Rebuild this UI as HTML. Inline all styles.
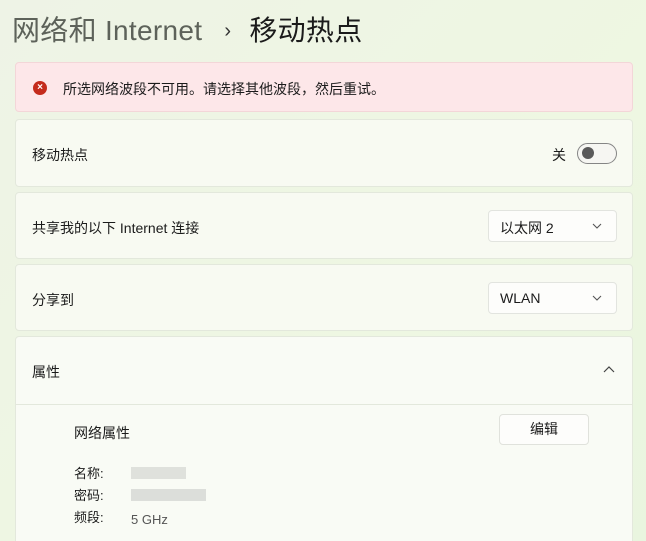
<!DOCTYPE html><html><head><meta charset="utf-8"><style>
html{overflow:hidden}
body{margin:0;width:646px;height:541px;overflow:hidden;background:linear-gradient(135deg,#eef3e6 0%,#eef7e2 60%,#e9f5df 100%);font-family:"Liberation Sans","Noto Sans CJK SC",sans-serif;color:#1b1b1b;position:relative}
.t{position:absolute;left:12px;top:9px;font-size:28px;white-space:nowrap;letter-spacing:0.3px}
.t .g{color:#5d625a}
.t .c{font-size:20px;margin:0 18px 0 22px;color:#333;position:relative;top:-3px}
.err{position:absolute;left:15px;top:62px;width:618px;height:50px;background:#fde7e9;border:1px solid #f3d6d8;border-radius:4px;box-sizing:border-box}
.err .i{position:absolute;left:17px;top:18px;width:14px;height:14px;border-radius:50%;background:#c42b1c;color:#fff;font-size:10px;line-height:14px;text-align:center;font-weight:bold}
.err .m{position:absolute;left:47px;top:16px;font-size:14px}
.card{position:absolute;left:15px;width:618px;background:#f8faf2;border:1px solid #e3e8dc;border-radius:4px;box-sizing:border-box}
.lbl{position:absolute;left:16px;font-size:14px}
.dd{position:absolute;left:472px;width:129px;height:32px;background:#fdfdfb;border:1px solid #e2e4df;border-radius:4px;box-sizing:border-box;font-size:14px}
.dd span{position:absolute;left:11px;top:7px}
.dd svg{position:absolute;right:14px;top:12px}
</style></head><body>
<div class="t"><span class="g">网络和 Internet</span><span class="c">›</span>移动热点</div>
<div class="err"><div class="i">×</div><div class="m">所选网络波段不可用。请选择其他波段，然后重试。</div></div>
<div class="card" style="top:119px;height:68px"><div class="lbl" style="top:25px">移动热点</div>
<div style="position:absolute;left:536px;top:25px;font-size:14px">关</div>
<div style="position:absolute;left:561px;top:23px;width:40px;height:21px;border:1px solid #858585;border-radius:11px;box-sizing:border-box;background:#f6f6f2"><div style="position:absolute;left:4px;top:3px;width:12px;height:12px;border-radius:50%;background:#5a5a5a"></div></div></div>
<div class="card" style="top:192px;height:67px"><div class="lbl" style="top:25px">共享我的以下 Internet 连接</div>
<div class="dd" style="top:17px"><span>以太网 2</span><svg width="10" height="6"><path d="M1 1l4 4 4-4" fill="none" stroke="#555" stroke-width="1.1"/></svg></div></div>
<div class="card" style="top:264px;height:67px"><div class="lbl" style="top:25px">分享到</div>
<div class="dd" style="top:17px"><span>WLAN</span><svg width="10" height="6"><path d="M1 1l4 4 4-4" fill="none" stroke="#555" stroke-width="1.1"/></svg></div></div>
<div class="card" style="top:336px;height:220px;background:#f9fbf5"><div class="lbl" style="top:25px">属性</div>
<svg style="position:absolute;left:587px;top:28px" width="12" height="8"><path d="M1 7l5-5 5 5" fill="none" stroke="#444" stroke-width="1.2"/></svg>
<div style="position:absolute;left:0;right:0;top:67px;border-top:1px solid #e3e8dc"></div>
<div style="position:absolute;left:58px;top:86px;font-size:14px">网络属性</div>
<div style="position:absolute;left:483px;top:77px;width:90px;height:31px;border:1px solid #e0e2dc;border-radius:4px;background:#fdfdfb;box-sizing:border-box;font-size:14px;text-align:center;line-height:29px">编辑</div>
<div style="position:absolute;left:58px;top:126px;font-size:13px;line-height:22px">名称:<br>密码:<br>频段:</div>
<div style="position:absolute;left:115px;top:130px;width:55px;height:12px;background:#dfe1dc"></div>
<div style="position:absolute;left:115px;top:152px;width:75px;height:12px;background:#dcdeda"></div>
<div style="position:absolute;left:115px;top:175px;font-size:13px;color:#555">5 GHz</div>
</div>
</body></html>
